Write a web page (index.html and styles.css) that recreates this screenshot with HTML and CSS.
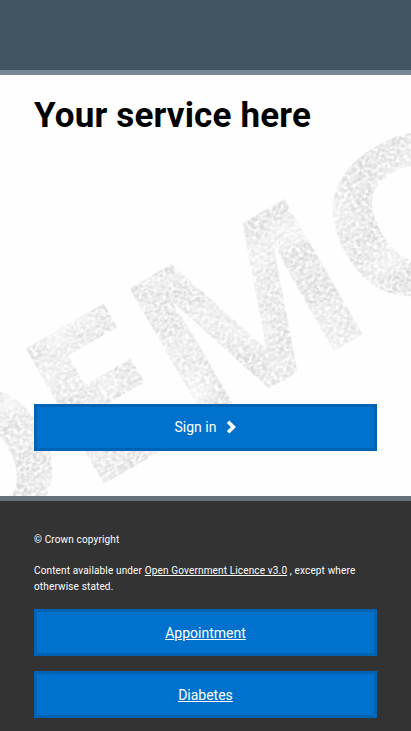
FILE: index.html
```html
<!DOCTYPE html>
<html lang="en">
<head>
<meta charset="utf-8">
<title>Your service here</title>
<link rel="stylesheet" href="styles.css">
</head>
<body>
<header class="site-header"></header>
<main class="content">
  <svg class="watermark" viewBox="0 75 411 421" aria-hidden="true">
    <defs>
      <filter id="scratched" filterUnits="userSpaceOnUse" x="-360" y="280" width="740" height="220" color-interpolation-filters="sRGB">
        <feTurbulence type="fractalNoise" baseFrequency="0.25 0.3" numOctaves="3" seed="8" result="fine"/>
        <feColorMatrix in="fine" type="matrix" values="0 0 0 0 0.85  0 0 0 0 0.85  0 0 0 0 0.85  1.7 1.7 0 0 -1.15" result="grain"/>
        <feTurbulence type="fractalNoise" baseFrequency="0.02 0.03" numOctaves="2" seed="3" result="broad"/>
        <feColorMatrix in="broad" type="matrix" values="0 0 0 0 0  0 0 0 0 0  0 0 0 0 0  1.6 0 0 0 0" result="wear"/>
        <feComposite in="grain" in2="wear" operator="in" result="worn"/>
        <feComposite in="worn" in2="SourceGraphic" operator="in"/>
      </filter>
    </defs>
    <g transform="rotate(-30)">
      <g class="watermark-letters" filter="url(#scratched)">
        <text transform="translate(-342 470) scale(1.09 1.01)">D</text>
        <text transform="translate(-171.7 471)">E</text>
        <text transform="translate(-53 471) scale(1.07 1)">M</text>
        <text class="watermark-round" transform="translate(162 467) scale(1.04 0.94)">O</text>
      </g>
    </g>
  </svg>
  <h1 class="title">Your service here</h1>
  <button class="button sign-in" type="button">Sign in
    <svg class="chevron" viewBox="0 0 10 14" aria-hidden="true"><path d="M1.6 1.7 6.9 7 1.6 12.3"/></svg>
  </button>
</main>
<footer class="site-footer">
  <p class="note">© Crown copyright</p>
  <p class="note">Content available under <a class="note-link" href="#">Open Government Licence v3.0</a> , except where otherwise stated.</p>
  <nav class="links">
    <a class="button" href="#">Appointment</a>
    <a class="button" href="#">Diabetes</a>
  </nav>
</footer>
</body>
</html>
```
FILE: styles.css
```css
* { box-sizing: border-box; }
body {
  margin: 0;
  height: 731px;
  overflow: hidden;
  font-family: Roboto, "Liberation Sans", sans-serif;
  background: #333;
}
.site-header {
  height: 75px;
  background: #425563;
  border-bottom: 5px solid #768692;
}
.content {
  position: relative;
  height: 421px;
  padding: 19px 34px 45px;
  display: flex;
  flex-direction: column;
  justify-content: space-between;
  background: #fefefe;
}
.watermark {
  position: absolute;
  inset: 0;
  width: 411px;
  height: 421px;
}
.watermark-letters {
  font-family: "Open Sans", sans-serif;
  font-weight: 700;
  font-size: 219px;
}
.watermark-round {
  stroke: #000;
  stroke-width: 5px;
}
.title {
  position: relative;
  margin: 0;
  font-size: 35px;
  line-height: 44px;
  font-weight: 700;
  letter-spacing: 0.17px;
  color: #000;
}
.button {
  display: flex;
  align-items: center;
  justify-content: center;
  width: 100%;
  height: 47px;
  padding: 0;
  border: 3px solid #0063b4;
  background: #0072ce;
  color: #fff;
  font-family: inherit;
  font-size: 14px;
  line-height: 20px;
}
.sign-in {
  position: relative;
  gap: 10px;
  padding-bottom: 2px;
  padding-left: 1px;
}
.chevron {
  width: 11px;
  height: 14px;
  fill: none;
  stroke: #fff;
  stroke-width: 3.6;
}
.site-footer {
  height: 235px;
  padding: 31px 34px 0;
  border-top: 5px solid #66727a;
  background: #333;
}
.note {
  margin: 0 0 15px;
  color: #fff;
  font-size: 10px;
  line-height: 16px;
  font-weight: 400;
  letter-spacing: 0.15px;
}
.note-link { color: #fff; }
.links {
  display: grid;
  gap: 15px;
  margin-top: -1px;
}
```
